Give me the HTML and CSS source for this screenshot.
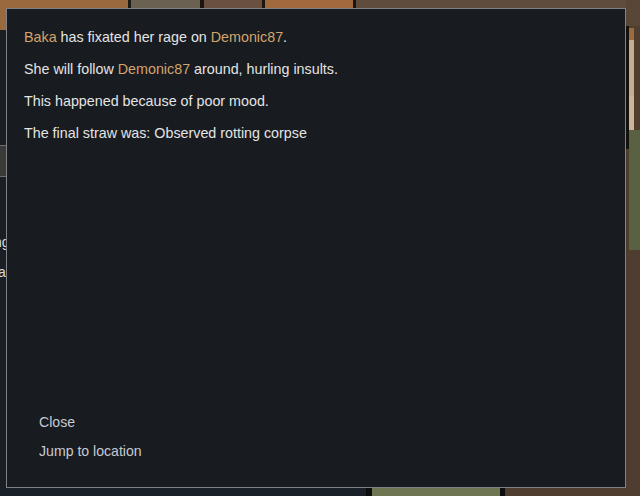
FILE: index.html
```html
<!DOCTYPE html>
<html>
<head>
<meta charset="utf-8">
<link rel="stylesheet" href="styles.css">
</head>
<body>
<div class="scene">
  <div class="bg b-top1"></div>
  <div class="bg b-top2"></div>
  <div class="bg b-top3"></div>
  <div class="bg b-top4"></div>
  <div class="bg b-top5"></div>
  <div class="bg b-left"></div>
  <div class="bg b-leftbox"></div>
  <div class="bg b-r1"></div>
  <div class="bg b-r2"></div>
  <div class="bg b-r3"></div>
  <div class="bg b-r4"></div>
  <div class="bg b-r5"></div>
  <div class="bg b-r6"></div>
  <div class="bg b-bot1"></div>
  <div class="bg b-bot2"></div>
  <div class="bg b-bot3"></div>
  <div class="bg b-bot4"></div>
  <div class="side-text t1">ng</div>
  <div class="side-text t2">a</div>

  <div class="dialog">
    <div class="message">
      <p><span class="name">Baka</span> has fixated her rage on <span class="name">Demonic87</span>.</p>
      <p>She will follow <span class="name">Demonic87</span> around, hurling insults.</p>
      <p>This happened because of poor mood.</p>
      <p>The final straw was: Observed rotting corpse</p>
    </div>
    <div class="options">
      <div class="option">Close</div>
      <div class="option">Jump to location</div>
    </div>
  </div>
</div>
</body>
</html>
```

FILE: styles.css
```css
html, body {
  margin: 0;
  padding: 0;
}
body {
  width: 640px;
  height: 496px;
  overflow: hidden;
  background: #4f3e30;
  font-family: "Liberation Sans", Arial, sans-serif;
}
.scene {
  position: relative;
  width: 640px;
  height: 496px;
}
.bg { position: absolute; }
.b-top1 { left: 0; top: 0; width: 128px; height: 30px; background: #9a6a3e; border-right: 3px solid #1e1a16; }
.b-top2 { left: 131px; top: 0; width: 69px; height: 10px; background: #6b6152; }
.b-top3 { left: 200px; top: 0; width: 62px; height: 10px; background: #6a5040; border-left: 4px solid #1c1510; }
.b-top4 { left: 262px; top: 0; width: 88px; height: 10px; background: #a06a3c; border-left: 3px solid #1c1510; border-right: 3px solid #1c1510; }
.b-top5 { left: 356px; top: 0; width: 284px; height: 10px; background: #5f4c3c; }
.b-left { left: 0; top: 30px; width: 6px; height: 466px; background: #1b1f25; }
.b-leftbox { left: 0; top: 145px; width: 6px; height: 30px; background: #3a3b39; border-top: 1px solid #6e6e6e; border-bottom: 1px solid #6e6e6e; }
.b-r1 { left: 626px; top: 0; width: 14px; height: 26px; background: #5a4636; }
.b-r2 { left: 626px; top: 26px; width: 3px; height: 123px; background: #15110d; }
.b-r3 { left: 629px; top: 28px; width: 5px; height: 12px; background: #9a6a40; }
.b-r4 { left: 629px; top: 40px; width: 5px; height: 56px; background: #c6ad90; }
.b-r5 { left: 629px; top: 96px; width: 5px; height: 34px; background: #cdb697; }
.b-r6 { left: 629px; top: 130px; width: 11px; height: 120px; background: #5a6042; border-right: 3px solid #15110d; }
.b-bot1 { left: 0; top: 488px; width: 366px; height: 8px; background: #1a2027; }
.b-bot2 { left: 366px; top: 488px; width: 6px; height: 8px; background: #0d0d0d; }
.b-bot3 { left: 372px; top: 488px; width: 128px; height: 8px; background: #6e7552; }
.b-bot4 { left: 500px; top: 488px; width: 5px; height: 8px; background: #0d0d0d; }
.side-text {
  position: absolute;
  left: -6px;
  color: #d9d9d9;
  font-size: 14px;
  line-height: 16px;
}
.t1 { top: 234px; }
.t2 { top: 264px; left: -2px; }

.dialog {
  position: absolute;
  left: 6px;
  top: 8px;
  width: 618px;
  height: 478px;
  border: 1px solid #7f8387;
  background: #181b20;
  display: flex;
  flex-direction: column;
}
.message {
  flex: 1;
  padding: 19px 17px 0 17px;
  display: flex;
  flex-direction: column;
  gap: 14px;
}
.message p {
  margin: 0;
  color: #e4e4e4;
  font-size: 14.3px;
  line-height: 18px;
}
.name { color: #d2a56c; }
.options {
  padding: 0 0 27px 32px;
  display: flex;
  flex-direction: column;
  gap: 11px;
}
.option {
  color: #c6cad2;
  font-size: 14.1px;
  line-height: 18px;
}
```
